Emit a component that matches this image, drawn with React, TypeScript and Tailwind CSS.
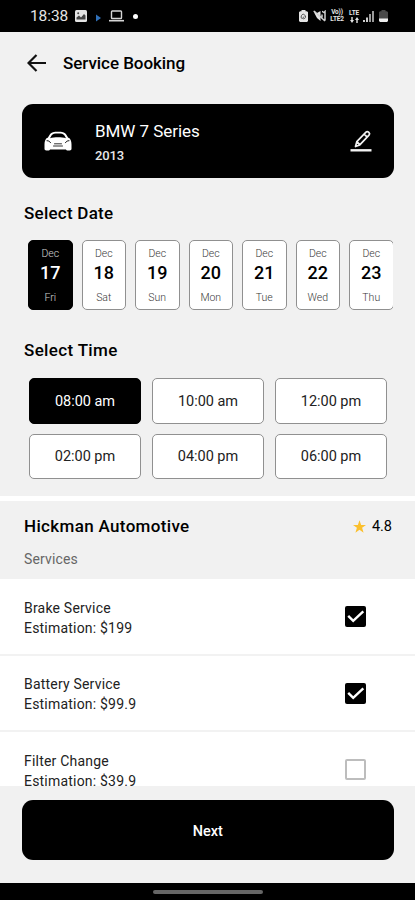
import React from 'react';

const DATES = [
  { num: '17', day: 'Fri' },
  { num: '18', day: 'Sat' },
  { num: '19', day: 'Sun' },
  { num: '20', day: 'Mon' },
  { num: '21', day: 'Tue' },
  { num: '22', day: 'Wed' },
  { num: '23', day: 'Thu' },
];

const TIMES = ['08:00 am', '10:00 am', '12:00 pm', '02:00 pm', '04:00 pm', '06:00 pm'];

const SERVICES = [
  { name: 'Brake Service', price: '$199', checked: true },
  { name: 'Battery Service', price: '$99.9', checked: true },
  { name: 'Filter Change', price: '$39.9', checked: false },
];

const StatusBar: React.FC = () => (
  <div className="flex h-8 shrink-0 items-center bg-black pl-[30px] pr-[27px] text-[#e4e4e4]">
    <span className="pt-px text-[15.5px] leading-none tracking-[-0.1px]">18:38</span>
    <svg className="ml-[7px] h-3 w-3" viewBox="0 0 12 12">
      <rect width="12" height="12" rx="1.5" fill="#e4e4e4" />
      <path d="M1.5 9.5V7.5L4 5.5l2 2 3-3.5 1.5 1.5v4z" fill="#444" />
      <circle cx="3.2" cy="3.2" r="1" fill="#444" />
    </svg>
    <svg className="ml-[9px] mt-1 h-2 w-[5px]" viewBox="0 0 5 8">
      <path d="M0 0.5L5 4 0 7.5z" fill="#3070b8" />
    </svg>
    <svg className="ml-2 h-3 w-[15px]" viewBox="0 0 15 12" fill="none" stroke="#d5d5d5">
      <rect x="2.5" y="1" width="10" height="7.5" rx="0.8" strokeWidth="1.4" />
      <path d="M0 10.7h15" strokeWidth="1.6" />
    </svg>
    <span className="ml-[9px] h-[5px] w-[5px] rounded-full bg-white" />

    <div className="ml-auto flex items-center">
      <svg className="h-3 w-[9px]" viewBox="0 0 9 12">
        <path d="M2.5 1.2V0h4v1.2H8l1 1V11l-1 1H1l-1-1V2.2l1-1z" fill="#e4e4e4" />
        <path d="M2.5 8.5c-1-2 0-4 2-4.5l2 2c.5 2-1.5 3.5-3 2.5l1.5-2" fill="none" stroke="#444" strokeWidth="0.9" />
      </svg>
      <svg className="ml-[5px] h-3 w-[13px]" viewBox="0 0 13 12">
        <path d="M0 .5L2.5 3H4L7.5 1v10L4 8z" fill="#e4e4e4" />
        <path d="M1 1l11 10M9 4.5v3M9 1.5c1.5 0 1.5 2 3 0v9" fill="none" stroke="#d0d0d0" strokeWidth="1.5" />
      </svg>
      <div className="ml-[3px] flex w-4 flex-col items-center text-[6.5px] font-bold leading-[7px] tracking-[-0.2px]">
        <span>Vo))</span>
        <span>LTE2</span>
      </div>
      <div className="ml-[3px] flex w-3 flex-col items-center text-[6.5px] font-bold leading-[7px] tracking-[-0.2px]">
        <span>LTE</span>
        <svg className="h-[6px] w-[9px]" viewBox="0 0 9 6" fill="#e4e4e4">
          <path d="M2 6L0 3h1.3V0h1.4v3H4zM7 0L5 3h1.3v3h1.4V3H9z" />
        </svg>
      </div>
      <svg className="ml-[3px] h-3 w-[11px]" viewBox="0 0 11 12" fill="#cfcfcf">
        <path d="M0 10h2v2H0zM3 7.5h2V12H3z" />
        <path d="M6 4h2v8H6zM9 1h2v11H9z" fill="#9a9a9a" />
      </svg>
      <svg className="ml-[5px] h-3 w-[9px]" viewBox="0 0 9 12">
        <path d="M2.5 1.2V0h4v1.2H8l1 1V9H0V2.2l1-1z" fill="#4a4a4a" />
        <path d="M0 8.5h9V11l-1 1H1l-1-1z" fill="#eee" />
      </svg>
    </div>
  </div>
);

const CarIcon: React.FC = () => (
  <svg className="h-[20px] w-[28px]" viewBox="0 0 28 20">
    <path
      fill="#fff"
      d="M14 .8c4.2 0 6.7.6 7.9 2.3l2.3 3.6 1 .3c1.600 1.500 2.300 3.800 2.300 6.600v4.200c0 1.100-.7 1.700-1.800 1.700h-1.800c-1 0-1.700-.4-1.900-1H6c-.2.600-.9 1-1.900 1H2.300C1.200 19.500.5 18.900.5 17.800v-4.200c0-2.800.7-5.100 2.300-6.600l1-.3 2.300-3.600C7.300 1.400 9.800.8 14 .8z"
    />
    <path fill="#000" d="M14 2.6c3.300 0 5.400.4 6.300 1.700l1.700 2.900c-4.500-1.200-11.500-1.200-16 0l1.700-2.900C8.600 3 10.700 2.600 14 2.600z" />
    <path fill="none" stroke="#000" strokeWidth="0.9" strokeLinecap="round" d="M3 9.700c1.900 0 3 .8 3.500 2M25 9.700c-1.900 0-3 .8-3.500 2" />
    <path fill="none" stroke="#333" strokeWidth="1" strokeLinecap="round" d="M10.500 12.800h7M9.500 15h9" />
  </svg>
);

const PencilIcon: React.FC = () => (
  <svg className="h-[22px] w-[22px]" viewBox="0 0 22 22" fill="none" stroke="#f2f2f2">
    <path d="M5.5 16.500l1.300-4.900L16 2.200c.8-.8 1.700-.8 2.500 0l.5.500c.8.800.8 1.700 0 2.500l-9.200 9.700zM14.200 4.100l3 3M7.200 11.900l2.400 2.600" strokeWidth="1.7" strokeLinejoin="round" />
    <path d="M.5 20.300h21" strokeWidth="2.4" />
  </svg>
);

const Checkbox: React.FC<{ checked: boolean }> = ({ checked }) =>
  checked ? (
    <div className="flex h-[21px] w-[21px] items-center justify-center rounded-[2px] bg-black">
      <svg className="h-[21px] w-[21px]" viewBox="0 0 21 21" fill="none">
        <path d="M3.2 9.900l5 5L18.300 5.300" stroke="#fff" strokeWidth="2.4" />
      </svg>
    </div>
  ) : (
    <div className="h-[21px] w-[21px] rounded-[2px] border-2 border-[#bdbdbd] bg-white" />
  );

const App: React.FC = () => {
  return (
    <div className="flex h-[900px] w-[415px] flex-col overflow-hidden bg-[#f1f1f1] font-['Roboto',sans-serif] text-black">
      <StatusBar />

      {/* Header */}
      <header className="flex h-[72px] shrink-0 items-center pb-[11px] pl-[27px]">
        <svg className="h-[18px] w-[20px]" viewBox="0 0 20 18" fill="none" stroke="#111" strokeWidth="2.2">
          <path d="M19 9H2M9.500 1L1.500 9l8 8" />
        </svg>
        <h1 className="ml-4 text-[17px] font-medium leading-5 tracking-[-0.05px]">Service Booking</h1>
      </header>

      {/* Selected car */}
      <section className="ml-[21.5px] mr-[21px] flex h-[74px] shrink-0 items-center rounded-[11px] bg-black pl-[22.5px] pr-[22.5px] text-white">
        <CarIcon />
        <div className="ml-[23px] flex-1 pt-[2px]">
          <h2 className="text-[17px] leading-5 tracking-[-0.05px]">BMW 7 Series</h2>
          <p className="mt-[7px] text-[13px] font-medium leading-4 tracking-[-0.1px] text-[#e8e8e8]">2013</p>
        </div>
        <PencilIcon />
      </section>

      {/* Date picker */}
      <h3 className="mt-[25px] shrink-0 pl-6 text-[17px] font-medium leading-5 tracking-[0.25px]">Select Date</h3>
      <div className="ml-[28px] mr-[22px] mt-[17px] flex h-[70px] shrink-0 gap-[9px] overflow-hidden">
        {DATES.map((d, i) => (
          <div
            key={d.num}
            className={`flex w-[44.5px] shrink-0 flex-col items-center rounded-[5px] border pt-[7px] ${
              i === 0 ? 'border-black bg-black text-white' : 'border-[#909090] bg-white text-black'
            }`}
          >
            <span className="text-[10.5px] font-light leading-3 opacity-80">Dec</span>
            <span className="mt-[3px] text-[18px] font-medium leading-5">{d.num}</span>
            <span className="mt-[9px] text-[10.5px] font-light leading-3 opacity-80">{d.day}</span>
          </div>
        ))}
      </div>

      {/* Time picker */}
      <h3 className="mt-[30px] shrink-0 pl-6 text-[17px] font-medium leading-5 tracking-[0.35px]">Select Time</h3>
      <div className="mx-[28.5px] mt-[18px] grid shrink-0 grid-cols-3 gap-x-[11px] gap-y-[10px]">
        {TIMES.map((time, i) => (
          <button
            key={time}
            className={`h-[45.5px] rounded-[5px] border pl-px pt-[2px] text-[14.5px] tracking-[-0.03px] ${
              i === 0 ? 'border-black bg-black text-white' : 'border-[#909090] bg-white text-[#222]'
            }`}
          >
            {time}
          </button>
        ))}
      </div>

      {/* Shop */}
      <section className="mt-[17px] h-[83px] shrink-0 border-t-[5px] border-white pl-6 pr-[23px] pt-[14px]">
        <div className="flex items-center justify-between">
          <h3 className="text-[17px] font-medium leading-5 tracking-[0.34px]">Hickman Automotive</h3>
          <div className="flex items-center text-[14.5px] leading-5">
            <svg className="mr-[6px] h-[13px] w-[13px]" viewBox="0 0 24 23" fill="#fbc02d">
              <path d="M12 0l3 8.500h9l-7.200 5.400L19.500 23 12 17.500 4.500 23l2.700-9.100L0 8.500h9z" />
            </svg>
            <span className="pt-[2px]">4.8</span>
          </div>
        </div>
        <p className="mt-3 text-[14px] leading-5 tracking-[0.15px] text-[#666]">Services</p>
      </section>

      {/* Service list */}
      <div className="min-h-0 flex-1 overflow-hidden bg-white">
        {SERVICES.map((s) => (
          <div key={s.name} className="flex h-[76.5px] items-center justify-between border-b-2 border-[#f2f2f2] pl-6 pr-[49px] pt-px">
            <div className="pt-[2px] text-[14px] leading-5 tracking-[0.2px] text-[#222]">
              <p>{s.name}</p>
              <p>Estimation: {s.price}</p>
            </div>
            <Checkbox checked={s.checked} />
          </div>
        ))}
      </div>

      <footer className="h-[97px] shrink-0 pl-[21.5px] pr-[21px] pt-[14px]">
        <button className="h-[60px] w-full rounded-[11px] bg-black pt-[3px] text-[14.5px] font-medium text-white">Next</button>
      </footer>
      <div className="flex h-[17px] shrink-0 items-center justify-center bg-black">
        <div className="h-1 w-[110px] rounded-full bg-[#666]" />
      </div>
    </div>
  );
};

export default App;
